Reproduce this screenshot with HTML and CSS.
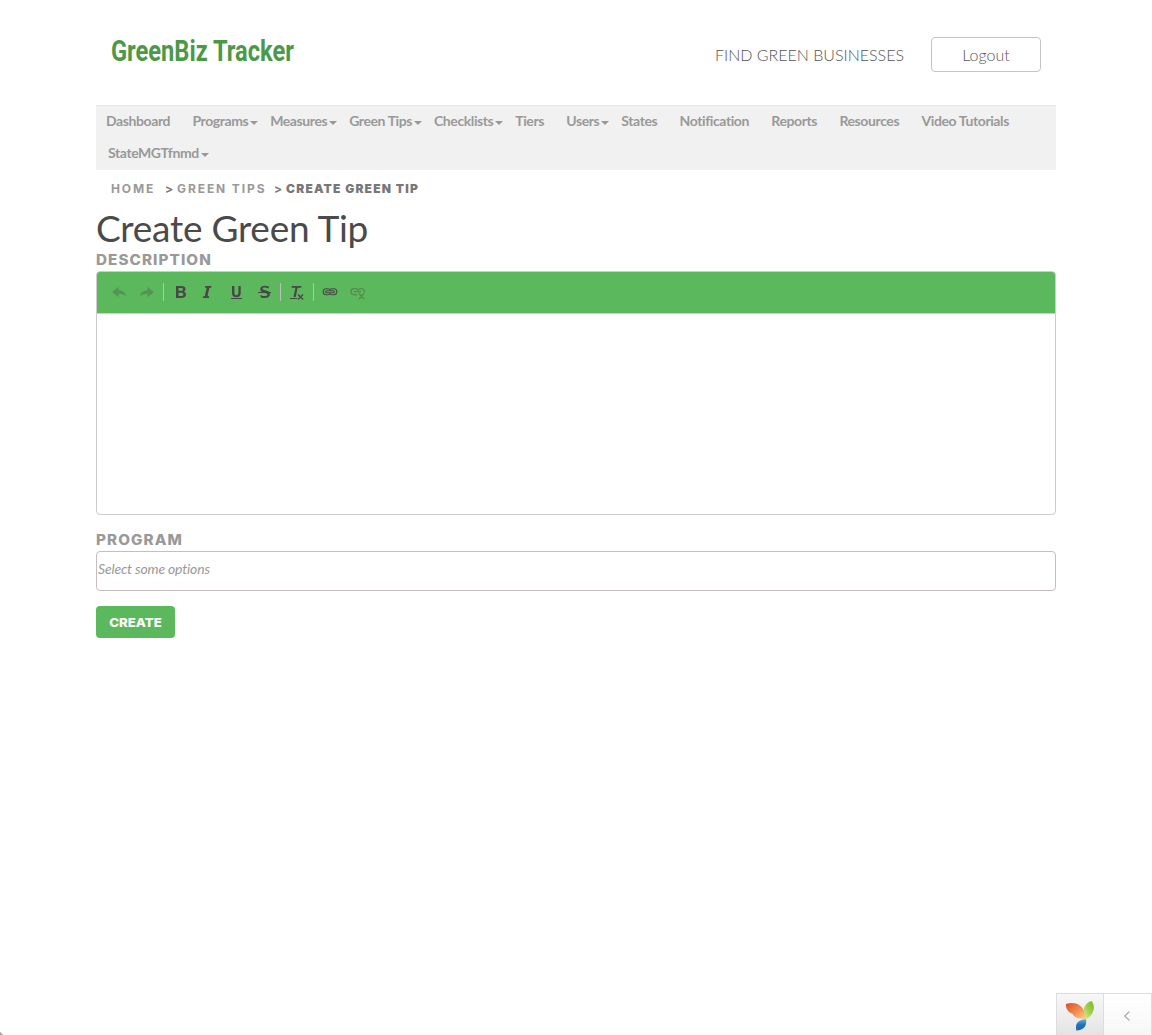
FILE: index.html
```html
<!DOCTYPE html>
<html lang="en">
<head>
<meta charset="utf-8">
<title>Create Green Tip</title>
<link rel="stylesheet" href="styles.css">
</head>
<body>
<div class="container">
  <header class="header">
    <div class="logo">GreenBiz Tracker</div>
    <a class="find">FIND GREEN BUSINESSES</a>
    <a class="logout">Logout</a>
  </header>
  <nav class="nav">
    <a>Dashboard</a><a class="drop">Programs</a><a class="drop">Measures</a><a class="drop">Green Tips</a><a class="drop">Checklists</a><a>Tiers</a><a class="drop">Users</a><a>States</a><a>Notification</a><a>Reports</a><a>Resources</a><a>Video Tutorials</a><a class="drop second">StateMGTfnmd</a>
  </nav>
  <div class="crumbs"><a class="c1">HOME</a><i>&gt;</i><a class="c2">GREEN TIPS</a><i>&gt;</i><b>CREATE GREEN TIP</b></div>
  <h1>Create Green Tip</h1>
  <label class="label">DESCRIPTION</label>
  <div class="editor">
    <div class="toolbar">
      <svg width="290" height="41" viewBox="97 272 290 41" fill="#474747">
        <g opacity=".32"><path d="M112 292l6.500-5v3.200c4.500 0 7 2.300 7.500 6.300-2-2.200-4-2.900-7.500-2.800v3.300z"/><path d="M154 292l-6.500-5v3.200c-4.500 0-7 2.300-7.500 6.300 2-2.200 4-2.900 7.500-2.800v3.300z"/></g>
        <path fill="#bcbcbc" d="M163 283h1v18h-1zM280 283h1v18h-1zM313 283h1v18h-1z"/>
        <path fill-rule="evenodd" d="M176 286h5.200c3 0 4.300 1.100 4.300 3 0 1.300-.7 2.200-1.900 2.600 1.500.4 2.400 1.500 2.400 3 0 2.300-1.700 3.400-4.600 3.400H176zM178.500 288v2.800h2.200c1.600 0 2.300-.4 2.300-1.400s-.7-1.400-2.300-1.400zM178.500 292.700v3.300h2.500c1.600 0 2.400-.5 2.400-1.600s-.8-1.700-2.400-1.700z"/>
        <path d="M205.300 286h6.200l-.3 1.700h-1.800l-1.900 8.600h1.800l-.4 1.700h-6.200l.4-1.700h1.700l1.900-8.600h-1.800z"/>
        <path d="M232 286h2.400v6.800c0 1.700.6 2.400 2 2.400s2-.7 2-2.400V286h2.300v7c0 2.900-1.500 4.200-4.300 4.200s-4.400-1.300-4.400-4.200zM231 298h11v1h-11z"/>
        <path d="M268.500 288.500c-1.300-.6-2.500-.9-3.600-.9-1.500 0-2.300.5-2.300 1.200 0 2.200 7.400.7 7.400 5.300 0 2.500-2 4-5.200 4-1.500 0-3-.3-4.200-.9v-2.300c1.500.8 2.900 1.200 4.200 1.200 1.700 0 2.600-.5 2.600-1.500 0-2.400-7.200-.6-7.200-5.300 0-2.200 1.800-3.500 4.800-3.500 1.400 0 2.700.3 4 .8zM258 292h13v1h-13z"/>
        <path d="M292 286h9.500l-.4 1.800h-3.500l-1.800 9.200h-2.300l1.900-9.200h-3.800zM290 298h7v1h-7z"/>
        <path d="M298 294.500l5 5M303 294.500l-5 5" stroke="#474747" stroke-width="1.400"/>
        <g fill="none" stroke="#474747" stroke-width="1.100"><path d="M330.500 290.200c-.6-1-1.300-1.500-2.300-1.500h-2a3 3 0 0 0 0 6h2c1 0 1.700-.5 2.300-1.500M329.500 290.200c.6-1 1.300-1.500 2.300-1.500h2a3 3 0 0 1 0 6h-2c-1 0-1.700-.5-2.300-1.500"/><rect x="325.800" y="290.700" width="8.400" height="2" rx="1"/></g>
        <g fill="none" stroke="#474747" stroke-width="1.200" opacity=".42"><path d="M357 294.700h-3a3 3 0 0 1 0-6h2c1 0 1.700.5 2.300 1.500.6-1 1.300-1.500 2.300-1.500h1.200a2.700 2.700 0 0 1 2.200 4.200M354 291.700h7M359 293.500l5 5.500M364 293.500l-5 5.500"/></g>
      </svg>
    </div>
    <div class="edit-area"></div>
  </div>
  <label class="label program">PROGRAM</label>
  <div class="select">Select some options</div>
  <button class="create"><span>CREATE</span></button>
</div>
<div class="debug">
  <div class="debug-logo">
    <svg width="30" height="32" viewBox="0 0 30 32">
      <defs>
        <linearGradient id="orange" x2="1" y2="1"><stop stop-color="#dc4c2b"/><stop offset=".55" stop-color="#f38c50"/><stop offset="1" stop-color="#f9d77a"/></linearGradient>
        <linearGradient id="green" x1="1" x2="0" y2="1"><stop stop-color="#76b82d"/><stop offset=".5" stop-color="#a4ce4c"/><stop offset="1" stop-color="#e2ecac"/></linearGradient>
        <linearGradient id="blue" y2="1" x2="0"><stop stop-color="#69a9da"/><stop offset=".5" stop-color="#1975bb"/><stop offset="1" stop-color="#2764a7"/></linearGradient>
      </defs>
      <path fill="url(#green)" d="M26.500 1c4.300 5 3 14-6.200 18.500-3.500-7.500-2.300-15.500 6.200-18.500z"/>
      <path fill="url(#orange)" d="M1 4C9 1 20.500 4 20.500 18.800 13 18.800 9 17.500 7.600 13.800 3.500 12.500.6 9 1 4z"/>
      <path fill="url(#blue)" d="M21 19.300c1 6.500-2 11.200-9.700 11.200C10 24 12.500 19.500 21 19.300z"/>
    </svg>
  </div>
  <div class="debug-toggle"><svg width="8" height="12" viewBox="0 0 8 12"><path d="M6.500 1.500L1.700 6l4.800 4.500" fill="none" stroke="#aaa" stroke-width="1.200"/></svg></div>
</div>
<div class="corner"></div>
</body>
</html>
```
FILE: styles.css
```css
* { box-sizing: border-box; }
body { margin: 0; background: #fff; font-family: Lato, sans-serif; color: #999; }
.container { width: 960px; margin: 0 auto; }
.header { height: 105px; display: flex; align-items: flex-start; padding: 37px 15px 0; }
.logo { font: bold 30px/27px Roboto, sans-serif; color: #4b9948; white-space: nowrap; transform: scaleX(.788); transform-origin: 0 0; margin-right: auto; }
.find { font-size: 16px; font-weight: 300; line-height: 35px; color: #555; white-space: nowrap; margin-right: 27px; }
.logout { width: 110px; height: 35px; border: 1px solid #c4c4c4; border-radius: 4px; text-align: center; font-size: 16px; line-height: 33px; font-weight: 300; color: #555; }
.nav { height: 65px; background: #f1f1f1; border-top: 1px solid #e5e5e5; display: flex; flex-wrap: wrap; align-content: flex-start; padding-left: 10px; }
.nav a { font-size: 14px; font-weight: bold; height: 32px; line-height: 30px; letter-spacing: -.4px; white-space: nowrap; margin-right: 22.300px; }
.nav .drop { margin-right: 11.900px; display: flex; }
.drop::after { content: ""; border: 4px solid transparent; border-top-color: #999; border-bottom: 0; height: 4px; margin: 15px 0 0 2px; }
.nav .second { margin-left: 2px; }
.crumbs { height: 37px; padding-left: 15px; display: flex; font: 700 12px/37px Inter, sans-serif; letter-spacing: 1.900px; }
.crumbs i { font-style: normal; color: #777; width: 12px; }
.crumbs a, .crumbs b { display: block; white-space: nowrap; }
.c1 { width: 54px; }
.c2 { width: 97px; }
.crumbs b { color: #777; letter-spacing: 1.200px; }
h1 { margin: 0; height: 44px; font-size: 37px; line-height: 41px; letter-spacing: -.25px; font-weight: normal; color: #4a4a4a; white-space: nowrap; }
.label { display: block; width: 200px; font: 800 14px/18px Inter, sans-serif; letter-spacing: 1px; height: 20px; transform: scaleX(1.086); transform-origin: 0 0; }
.editor { height: 244px; border: 1px solid #ccc; border-radius: 4px; overflow: hidden; }
.toolbar { height: 42px; background: #5cb85c; border-bottom: 1px solid #ccc; }
.toolbar svg { display: block; }
.program { margin-top: 16px; }
.select { height: 40px; border: 1px solid #c4bebe; border-radius: 4px; padding-left: 1px; font-size: 14px; line-height: 34px; letter-spacing: -.17px; font-style: italic; }
.create { display: block; margin-top: 15px; width: 79px; height: 32px; border: 0; border-radius: 4px; background: #5cb85c; color: #fff; font: 800 12px/33px Inter, sans-serif; padding: 0; }
.create span { display: block; transform: scaleX(1.1); }
.debug { position: fixed; right: 0; bottom: 0; width: 96px; height: 42px; border: 1px solid #ddd; border-right: 0; border-bottom: 0; display: flex; }
.debug-logo { width: 47px; background: linear-gradient(#f7f7f7, #e4e4e4); border-right: 1px solid #ddd; padding: 6px 0 0 8px; }
.debug-toggle { flex: 1; background: linear-gradient(#fff, #f7f7f7); display: flex; align-items: center; justify-content: center; padding: 3px 2px 0 0; border-right: 1px solid #ddd; }
.corner { position: fixed; left: 0; bottom: 0; width: 4px; height: 4px; background: linear-gradient(45deg, #aaa 35%, transparent 50%); }
```
